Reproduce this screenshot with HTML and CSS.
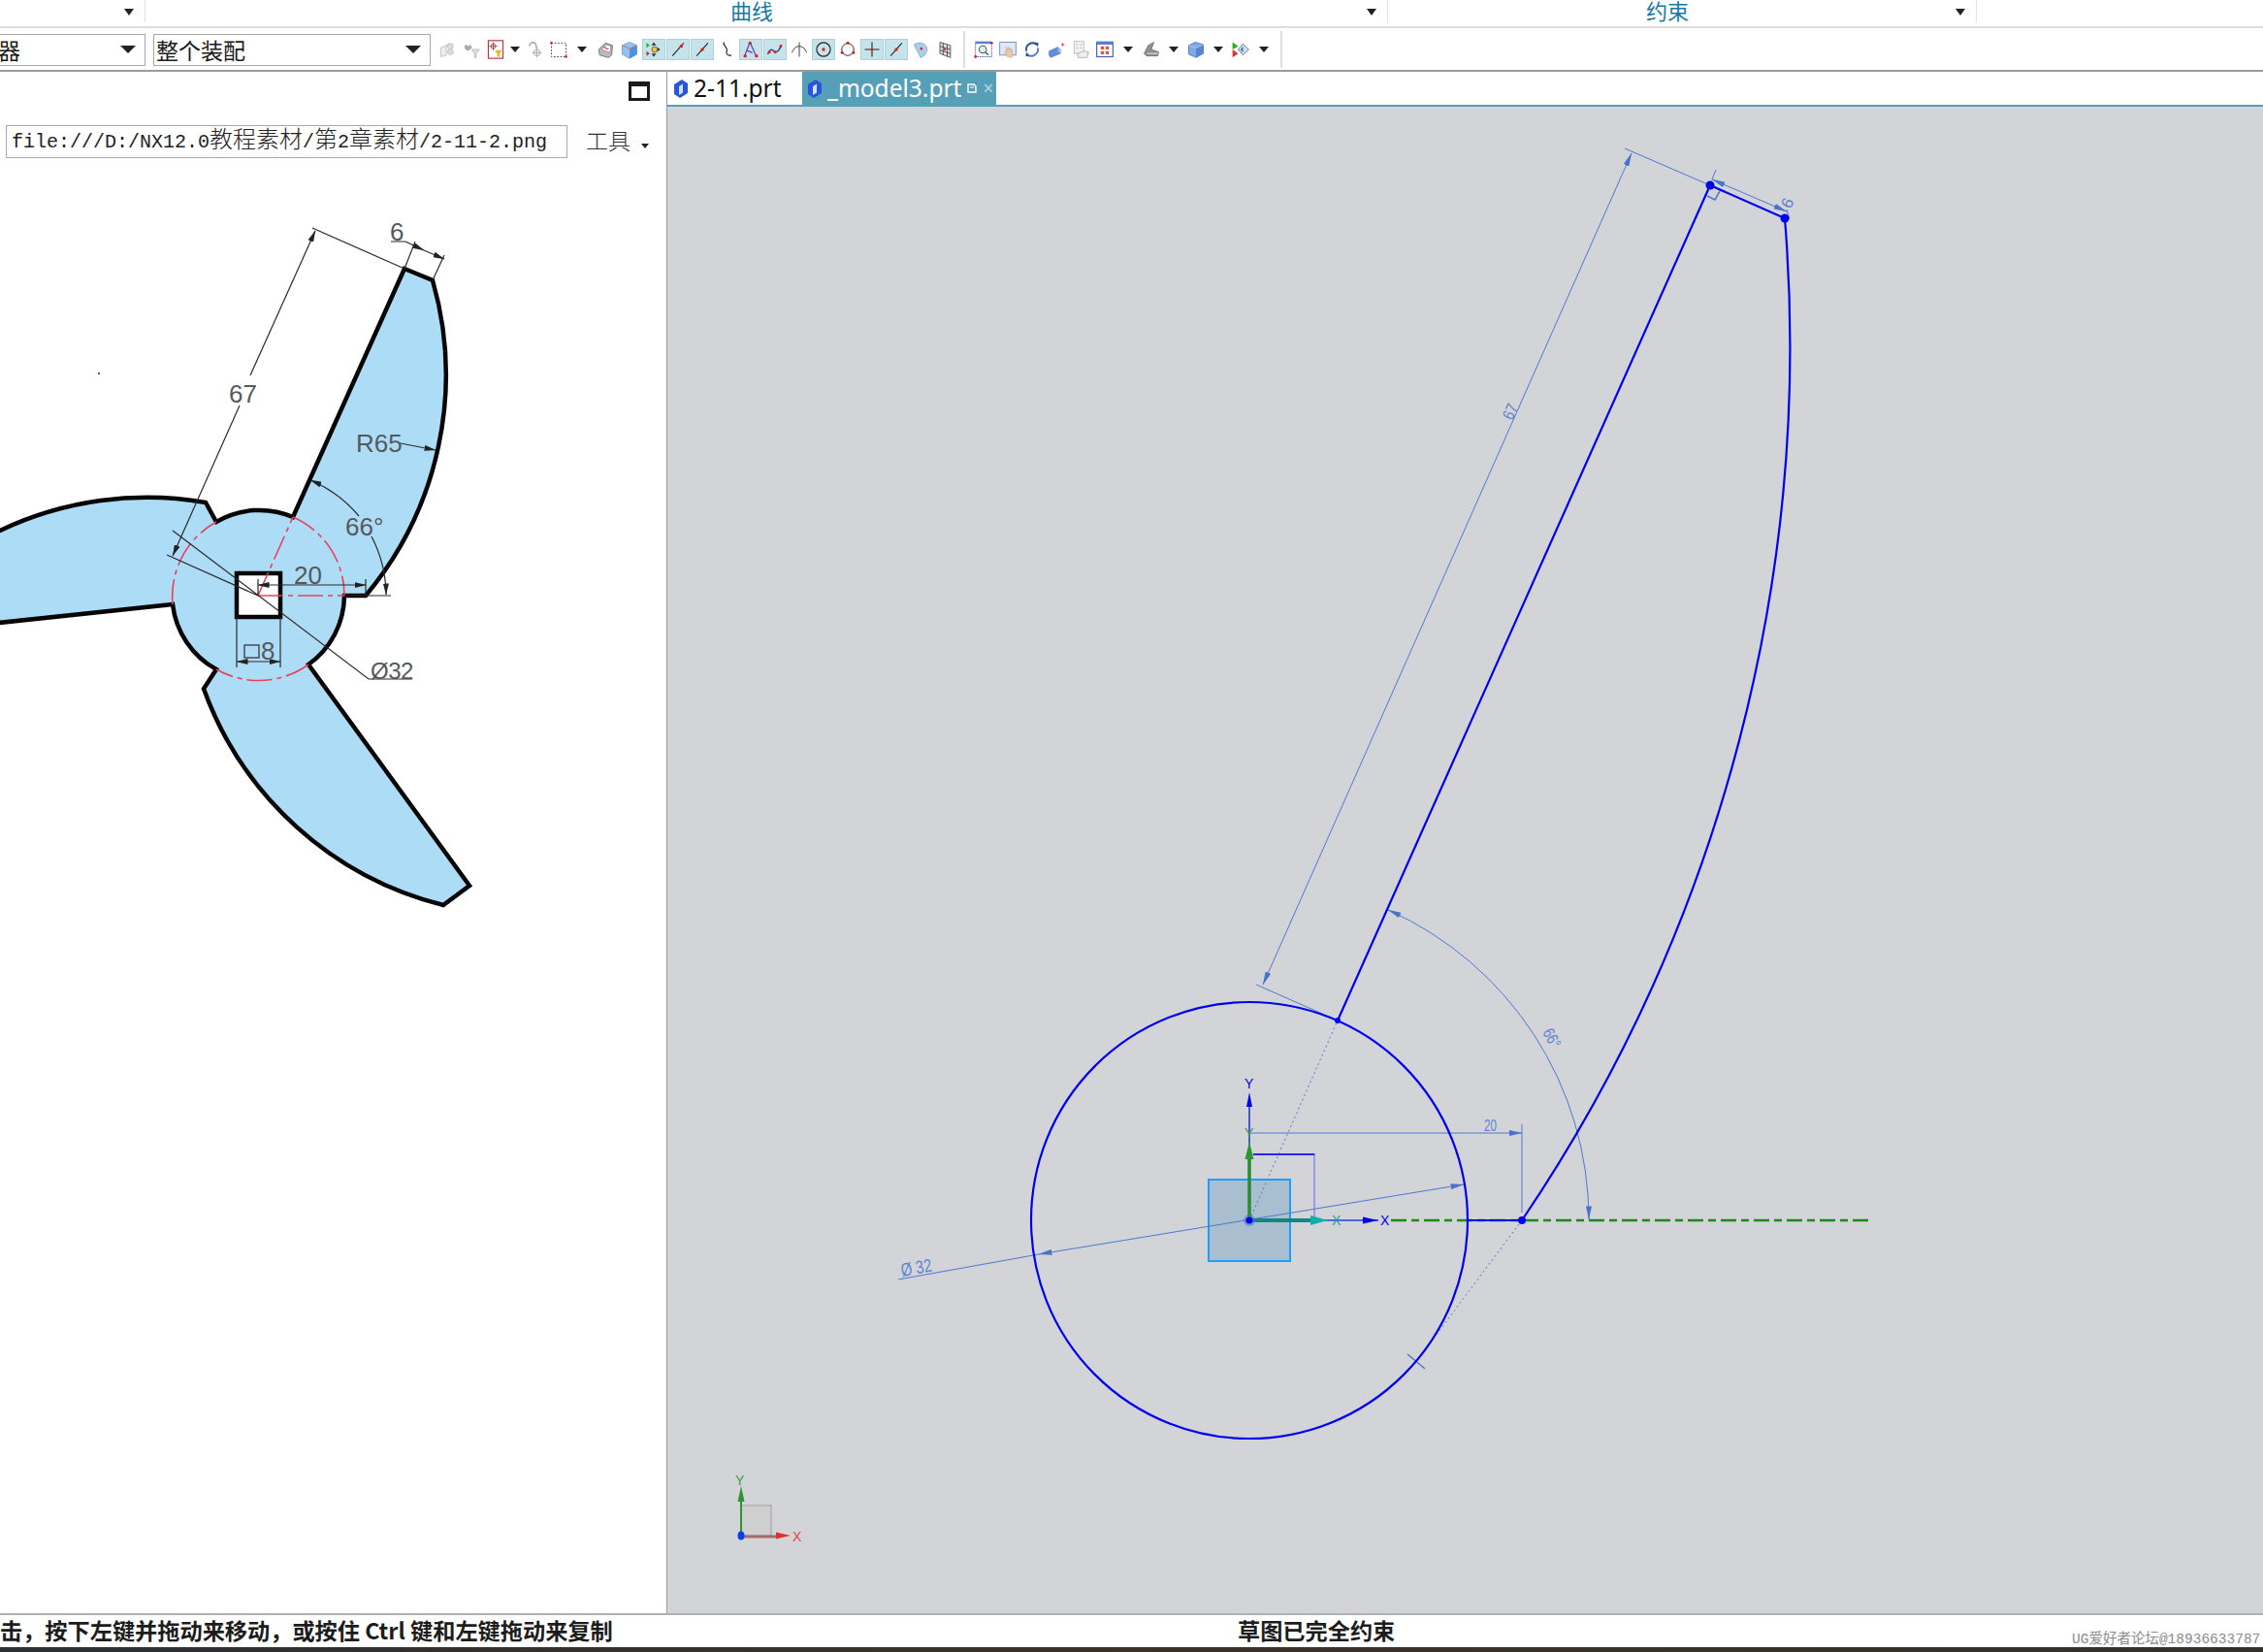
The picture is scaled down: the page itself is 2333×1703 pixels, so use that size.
FILE: index.html
```html
<!DOCTYPE html>
<html lang="zh">
<head>
<meta charset="utf-8">
<title>NX 草图</title>
<link rel="stylesheet" href="styles.css">
</head>
<body>
<div class="app">
  <div class="ribbon">
    <div class="rsec rsec-a"><span class="rlabel"></span><i class="tri tri-s"></i></div>
    <div class="rsec rsec-b"><span class="rlabel">曲线</span><i class="tri tri-s"></i></div>
    <div class="rsec rsec-c"><span class="rlabel">约束</span><i class="tri tri-s"></i></div>
  </div>

  <div class="toolbar">
    <div class="combo combo-a"><span class="combo-text combo-clip">器</span><i class="tri tri-l"></i></div>
    <div class="combo combo-b"><span class="combo-text">整个装配</span><i class="tri tri-l"></i></div>
    <div class="tools">
      <span class="btn"><svg class="ic" viewBox="0 0 24 24"><path d="M4 10l7-3v12l-7 2zM11 7l3-2v3" fill="#eee" stroke="#bbb"/><circle cx="16" cy="8" r="3.5" fill="#ddd" stroke="#bbb"/><circle cx="16" cy="15" r="3.5" fill="#ddd" stroke="#bbb"/></svg></span>
      <span class="btn"><svg class="ic" viewBox="0 0 24 24"><path d="M5 6a4 4 0 1 0 6 5l2-1-3-5-1 3z" fill="#aaa"/><path d="M12 12h10l-4 5v5h-2v-5z" fill="#ddd" stroke="#bbb"/></svg></span>
      <span class="btn"><svg class="ic" viewBox="0 0 24 24"><rect x="3" y="1" width="18" height="22" fill="#fff" stroke="#c8303c" stroke-width="1.4"/><circle cx="9" cy="8" r="3" fill="none" stroke="#555"/><path d="M9 3v10M4 8h10" stroke="#a33"/><path d="M11 13h9l-3 4v4h-3v-4z" fill="#f0b020"/></svg></span>
      <span class="arrow a14"><i class="tri tri-m"></i></span>
      <span class="btn"><svg class="ic" viewBox="0 0 24 24"><path d="M6 8a4 4 0 0 1 8-1l1 4" fill="none" stroke="#aaa" stroke-width="2"/><circle cx="15" cy="16" r="4" fill="#eee" stroke="#aaa"/><path d="M15 10v12M9 16h12" stroke="#aaa"/></svg></span>
      <span class="btn"><svg class="ic" viewBox="0 0 24 24"><rect x="3" y="4" width="18" height="17" fill="none" stroke="#222" stroke-dasharray="2 2"/><circle cx="3" cy="4" r="1.6" fill="#d22"/><circle cx="21" cy="21" r="1.6" fill="#d22"/></svg></span>
      <span class="arrow a22"><i class="tri tri-m"></i></span>
      <span class="btn"><svg class="ic" viewBox="0 0 24 24"><path d="M4 12l8-8 9 3-1 12-4 3-11-3z" fill="#bbb" stroke="#666"/><path d="M7 12l7-6 5 2-1 8z" fill="#fff" stroke="#888"/><path d="M10 9l6 3" stroke="#d33" stroke-width="1.5"/></svg></span>
      <span class="btn"><svg class="ic" viewBox="0 0 24 24"><path d="M3 7l9-4 9 4v11l-9 5-9-5z" fill="#8ec4ee" stroke="#6a9fd8"/><path d="M12 11v12l9-5V7z" fill="#4f8fdc"/><path d="M3 7l9 4 9-4" fill="none" stroke="#e55" stroke-width=".9"/></svg></span>
      <span class="btn on"><svg class="ic" viewBox="0 0 24 24"><path d="M12 3l3 4h-6zM12 21l-3-4h6zM20 12l-4 3v-6z" fill="#333"/><circle cx="13" cy="12" r="3.5" fill="#f4c430" stroke="#555"/><path d="M3 4v6l4-3z" fill="#2a2"/><path d="M3 14v6l4-3z" fill="#d22"/></svg></span>
      <span class="btn on"><svg class="ic" viewBox="0 0 24 24"><path d="M5 20L19 4" stroke="#222" stroke-width="1.3"/><circle cx="16" cy="8" r="2" fill="#d22"/></svg></span>
      <span class="btn on"><svg class="ic" viewBox="0 0 24 24"><path d="M5 20L19 4" stroke="#222" stroke-width="1.3"/><circle cx="12" cy="12" r="2" fill="#d22"/></svg></span>
      <span class="btn"><svg class="ic" viewBox="0 0 24 24"><path d="M9 3c-3 4 6 6 3 12-1 3 3 5 6 4" fill="none" stroke="#222" stroke-width="1.4"/></svg></span>
      <span class="btn on"><svg class="ic" viewBox="0 0 24 24"><path d="M11 3L4 21M11 3l8 18M7 13l7 3" fill="none" stroke="#6a3fb8" stroke-width="1.5"/><circle cx="11" cy="4" r="2" fill="#d22"/><circle cx="5" cy="20" r="2" fill="#d22"/><circle cx="19" cy="20" r="2" fill="#d22"/></svg></span>
      <span class="btn on"><svg class="ic" viewBox="0 0 24 24"><path d="M3 18c4-10 7-4 9-3s6-2 8-9" fill="none" stroke="#23458a" stroke-width="1.6"/><circle cx="5" cy="15" r="1.8" fill="#d22"/><circle cx="12" cy="15" r="1.8" fill="#d22"/><circle cx="19" cy="8" r="1.8" fill="#d22"/></svg></span>
      <span class="btn"><svg class="ic" viewBox="0 0 24 24"><path d="M3 16c2-6 6-8 9-8s7 2 9 8M12 3v18" fill="none" stroke="#444" stroke-width="1.2"/></svg></span>
      <span class="btn on"><svg class="ic" viewBox="0 0 24 24"><circle cx="12" cy="12" r="8.5" fill="none" stroke="#222" stroke-width="1.4"/><circle cx="12" cy="12" r="2" fill="#d22"/></svg></span>
      <span class="btn"><svg class="ic" viewBox="0 0 24 24"><circle cx="12" cy="12" r="7.5" fill="none" stroke="#333" stroke-width="1.2"/><circle cx="12" cy="4" r="1.8" fill="#d22"/><circle cx="5" cy="16" r="1.8" fill="#d22"/><circle cx="19" cy="16" r="1.8" fill="#d22"/></svg></span>
      <span class="btn on"><svg class="ic" viewBox="0 0 24 24"><path d="M12 3v18M3 12h18" stroke="#222" stroke-width="1.3"/><circle cx="12" cy="12" r="1.8" fill="#d22"/></svg></span>
      <span class="btn on"><svg class="ic" viewBox="0 0 24 24"><path d="M5 20L19 4" stroke="#222" stroke-width="1.3"/><circle cx="12" cy="12" r="2" fill="#d22"/></svg></span>
      <span class="btn"><svg class="ic" viewBox="0 0 24 24"><path d="M4 6c6-4 14-2 16 4 1 5-3 11-8 12C10 17 6 11 4 6z" fill="#a9cfe8" stroke="#7fa6c6"/><circle cx="13" cy="11" r="1.6" fill="#d22"/></svg></span>
      <span class="btn"><svg class="ic" viewBox="0 0 24 24"><path d="M6 3l13 4v15L6 17zM6 8l13 4M6 13l13 4M10 4v15M15 6v15" fill="#ddd" stroke="#444"/><circle cx="12" cy="12" r="1.4" fill="#d22"/></svg></span>
      <span class="vsep vsep-a"></span>
      <span class="btn"><svg class="ic" viewBox="0 0 24 24"><rect x="2" y="3" width="20" height="18" fill="#fff" stroke="#2a4fc0" stroke-dasharray="2 1"/><rect x="2" y="2" width="20" height="3" fill="#5a7fd0"/><circle cx="11" cy="12" r="4.5" fill="#ddeef5" stroke="#555" stroke-width="1.3"/><path d="M14 15l4 4" stroke="#555" stroke-width="1.6"/><circle cx="2" cy="21" r="1.7" fill="#d22"/><circle cx="22" cy="4" r="1.7" fill="#d22"/></svg></span>
      <span class="btn"><svg class="ic" viewBox="0 0 24 24"><rect x="2" y="3" width="20" height="16" fill="#dfe8f6" stroke="#6a80b8"/><path d="M11 21l-3-6 2-1V9l2 4 1-4 1 4 2-3v5l2-2-1 9z" fill="#eccb9c" stroke="#b98" stroke-width=".6"/></svg></span>
      <span class="btn"><svg class="ic" viewBox="0 0 24 24"><path d="M5 14A8 8 0 0 1 18 6" fill="none" stroke="#2a4fa0" stroke-width="2.2"/><path d="M19 10A8 8 0 0 1 6 18" fill="none" stroke="#5a7fc0" stroke-width="2.2"/><path d="M15 3l5 1-1 5zM9 21l-5-1 1-5z" fill="#2a4fa0"/></svg></span>
      <span class="btn"><svg class="ic" viewBox="0 0 24 24"><path d="M3 14l11-5 3 3v5l-12 5-2-3z" fill="#5f8fd8" stroke="#3a66b0" stroke-width=".6"/><path d="M14 9l3 3v5l-3-3z" fill="#9fc0ee"/><path d="M20 4v4M18 6h4" stroke="#d22"/></svg></span>
      <span class="btn"><svg class="ic" viewBox="0 0 24 24"><rect x="4" y="2" width="12" height="15" fill="#f2f2f2" stroke="#bbb"/><path d="M6 6h3M11 6h3M6 10h3M11 10h3" stroke="#bbb"/><path d="M8 17l8-3 6 1-2 7H9z" fill="#eee" stroke="#aaa"/></svg></span>
      <span class="btn"><svg class="ic" viewBox="0 0 24 24"><rect x="2" y="3" width="20" height="18" fill="#fff" stroke="#3f5fc0" stroke-width="1.4"/><rect x="2" y="2" width="20" height="4" fill="#5a7fd0"/><path d="M7 8h4v4H7zM13 8h4v4h-4zM7 14h4v4H7zM13 14h4v4h-4z" fill="#e8523a"/></svg></span>
      <span class="arrow a22"><i class="tri tri-m"></i></span>
      <span class="btn"><svg class="ic" viewBox="0 0 24 24"><path d="M3 17l5-10 7-4-3 9 9 3-1 5H6z" fill="#8f8f8f" stroke="#555" stroke-width=".7"/><path d="M7 17h13" stroke="#ddd" stroke-width="1.4"/></svg></span>
      <span class="arrow a20"><i class="tri tri-m"></i></span>
      <span class="btn"><svg class="ic" viewBox="0 0 24 24"><path d="M3 7l8-4 10 3v11l-9 5-9-4z" fill="#7ea9e6" stroke="#4a72b8"/><path d="M12 10v12l9-5V6z" fill="#5885cf"/><path d="M3 7l9 3 9-4" fill="none" stroke="#b7d0f2"/></svg></span>
      <span class="arrow a20"><i class="tri tri-m"></i></span>
      <span class="btn"><svg class="ic" viewBox="0 0 24 24"><path d="M2 3l7 5-7 4z" fill="#2a2"/><path d="M2 12l7 5-7 5z" fill="#d33"/><path d="M15 5l7 7-7 7-6-7z" fill="#cfe0f5" stroke="#567"/><path d="M15 8l-3 4 3 4z" fill="#3a66b0"/></svg></span>
      <span class="arrow a22"><i class="tri tri-m"></i></span>
      <span class="vsep vsep-b"></span>
    </div>
  </div>

  <div class="main">
    <aside class="side">
      <div class="side-head"><span class="maxbtn"></span></div>
      <div class="side-bar">
        <div class="urlbox">file:///D:/NX12.0<span class="cjk">教程素材</span>/<span class="cjk">第</span>2<span class="cjk">章素材</span>/2-11-2.png</div>
        <span class="toolmenu">工具</span>
        <i class="tri tri-xs"></i>
      </div>
      <svg class="drawing" viewBox="0 170 686 1493" width="686" height="1493">
        <defs>
          <marker id="ah" viewBox="0 0 12 6" refX="11.5" refY="3" markerWidth="12" markerHeight="6" markerUnits="userSpaceOnUse" orient="auto-start-reverse"><path d="M0 0L12 3 0 6z" fill="#222"/></marker>
        </defs>
        <path class="blade" d="M417 277L446 289A354 354 0 0 1 377 614L355 614A88 88 0 0 1 318 685L484 913L457 933A354 354 0 0 1 210 710L223 690A88 88 0 0 1 178 623L-20 644L-20 557L0 547A354 354 0 0 1 212 518L223 538A88 88 0 0 1 302 533Z"/>
        <path class="red" d="M302 533A88 88 0 0 1 355 614M318 685A88 88 0 0 1 223 690M178 623A88 88 0 0 1 223 538"/>
        <rect class="keyway" x="244" y="591" width="45" height="45"/>
        <path class="red" d="M266 614L302 533M266 614L355 614"/>
        <path class="dim" d="M322 235L417 277M172 572L266 614M428 249L417 277M458 263L446 289M355 614H403M377 597V614M266 597V614M244 636V688M289 636V688M178 547L380 700H425M403 249H418"/>
        <path class="dim" marker-start="url(#ah)" d="M325 238L258 387"/>
        <path class="dim" marker-start="url(#ah)" d="M178 573L247 418"/>
        <path class="dim" marker-end="url(#ah)" d="M418 249L437 258"/>
        <path class="dim" marker-end="url(#ah)" d="M437 258L458 267"/>
        <path class="dim" marker-start="url(#ah)" marker-end="url(#ah)" d="M266 603H377"/>
        <path class="dim" marker-start="url(#ah)" d="M320 495A132 132 0 0 1 370 532"/>
        <path class="dim" marker-end="url(#ah)" d="M383 553A132 132 0 0 1 398 613"/>
        <path class="dim" marker-end="url(#ah)" d="M413 457L449 464"/>
        <path class="dim" marker-start="url(#ah)" marker-end="url(#ah)" d="M244 682H289"/>
        <rect class="dim" x="252" y="665" width="15" height="13"/>
        <circle class="speck" cx="102" cy="385" r="1"/>
        <text class="note" x="236" y="415">67</text>
        <text class="note" x="402" y="248">6</text>
        <text class="note" x="367" y="466">R65</text>
        <text class="note" x="356" y="552">66°</text>
        <text class="note" x="303" y="602">20</text>
        <text class="note" x="269" y="680">8</text>
        <text class="note note-sm" x="382" y="700">Ø32</text>
      </svg>
    </aside>

    <section class="work">
      <div class="tabs">
        <div class="tab">
          <svg class="tabic" viewBox="0 0 16 20"><path d="M1 6l8-5 6 4v10l-8 5-6-4z" fill="#2a55d8"/><path d="M6 8l4-2.500v9L6 17z" fill="#cfe0ff"/></svg>
          <span>2-11.prt</span>
        </div>
        <div class="tab active">
          <svg class="tabic" viewBox="0 0 16 20"><path d="M1 6l8-5 6 4v10l-8 5-6-4z" fill="#2a55d8"/><path d="M6 8l4-2.500v9L6 17z" fill="#cfe0ff"/></svg>
          <span>_model3.prt</span>
          <svg class="pin" viewBox="0 0 10 12"><path d="M1 2h6l2 2v6H1z" fill="none" stroke="#fff" stroke-width="1.4"/><path d="M3 5h4" stroke="#fff"/></svg>
          <span class="close">×</span>
        </div>
      </div>
      <svg class="canvas" viewBox="688 110 1645 1553" width="1645" height="1553">
        <defs>
          <marker id="bh" viewBox="0 0 14 6" refX="13.5" refY="3" markerWidth="14" markerHeight="6" markerUnits="userSpaceOnUse" orient="auto-start-reverse"><path d="M0 0L14 3 0 6z" fill="#4a72cc"/></marker>
        </defs>
        <rect class="dcs" x="1246" y="1216" width="84" height="84"/>
        <path class="ghost" d="M1292 1190H1355V1258"/>
        <path class="sk-thin" d="M1292 1190H1355"/>
        <path class="bdot" d="M1288 1258L1379 1052M1569 1258L1480 1377"/>
        <path class="bdim" d="M1675 153L1763 191M1295 1015L1379 1052M1769 175L1765 185M1842 216L1845 226M1569 1159V1250"/>
        <path class="bmark" d="M1760 202L1768 206L1773 197M1451 1396L1469 1411"/>
        <path class="bdim" marker-start="url(#bh)" marker-end="url(#bh)" d="M1682 158L1302 1015"/>
        <path class="bdim" marker-start="url(#bh)" marker-end="url(#bh)" d="M1765 185L1842 218"/>
        <path class="bdim" marker-start="url(#bh)" marker-end="url(#bh)" d="M1431 938A350 350 0 0 1 1638 1257"/>
        <path class="bdim" marker-end="url(#bh)" d="M1289 1168H1569"/>
        <path class="bdim" d="M926 1319L1071 1293"/>
        <path class="bdim" marker-start="url(#bh)" marker-end="url(#bh)" d="M1071 1293L1509 1221"/>
        <path class="axis-dash" d="M1434 1258H1931"/>
        <circle class="sk" cx="1288" cy="1258" r="225"/>
        <path class="sk" d="M1379 1052L1763 191L1840 225A1609 1609 0 0 1 1569 1258H1513"/>
        <g class="pts">
          <circle cx="1763" cy="191" r="4.500"/><circle cx="1840" cy="225" r="4.500"/><circle cx="1569" cy="1258" r="4"/><circle cx="1379" cy="1052" r="3"/>
        </g>
        <text class="blab" transform="translate(1559 434) rotate(-66)" textLength="16" lengthAdjust="spacingAndGlyphs">67</text>
        <text class="blab" transform="translate(1846 216) rotate(-66)">6</text>
        <text class="blab" transform="translate(1590 1064) rotate(62)" textLength="20" lengthAdjust="spacingAndGlyphs">66°</text>
        <text class="blab" x="1530" y="1166" textLength="13" lengthAdjust="spacingAndGlyphs">20</text>
        <text class="blab blab-lg" transform="translate(930 1316) rotate(-10)" textLength="32" lengthAdjust="spacingAndGlyphs">Ø 32</text>
        <path class="ax-lil" d="M1288 1177V1140"/>
        <path class="ax-blue" d="M1288 1258V1140M1288 1258H1421"/>
        <path class="head-blue" d="M1288 1126l-3 15h6zM1421 1258l-16-3.500v7z"/>
        <path class="ax-green" d="M1288 1258V1190"/>
        <path class="head-green" d="M1288 1177l-4.500 18h9z"/>
        <path class="ax-teal" d="M1288 1258H1352"/>
        <path class="head-teal" d="M1369 1258l-18-5v10z"/>
        <text class="axl axl-blue" x="1283" y="1122">Y</text>
        <text class="axl axl-green" x="1283" y="1173">Y</text>
        <text class="axl axl-teal" x="1373" y="1263">X</text>
        <text class="axl axl-blue" x="1423" y="1263">X</text>
        <circle class="halo" cx="1288" cy="1258" r="6"/>
        <circle class="origin" cx="1288" cy="1258" r="3.500"/>
        <rect class="wcs-box" x="764" y="1552" width="31" height="31"/>
        <path class="wcs-g" d="M764 1583V1545"/>
        <path class="head-green" d="M764 1532l-3.500 16h7z"/>
        <path class="wcs-r" d="M764 1584H800"/>
        <path class="head-red" d="M815 1583l-15-3.500v7z"/>
        <text class="axl axl-green" x="758" y="1531">Y</text>
        <text class="axl axl-red" x="817" y="1589">X</text>
        <ellipse class="wcs-o" cx="764" cy="1583" rx="3.500" ry="4.500"/>
      </svg>
    </section>
  </div>

  <div class="status">
    <span class="st-a">击，按下左键并拖动来移动，或按住 Ctrl 键和左键拖动来复制</span>
    <span class="st-b">草图已完全约束</span>
    <span class="st-c">UG爱好者论坛@18936633787</span>
  </div>
  <div class="taskbar"></div>
</div>
</body>
</html>
```

FILE: styles.css
```css
* { box-sizing: border-box; }
html, body { margin: 0; padding: 0; background: #fff; }
body { width: 2333px; height: 1703px; overflow: hidden; font-family: "Noto Sans CJK SC", "Noto Sans", sans-serif; color: #222; }
.app { display: flex; flex-direction: column; width: 2333px; height: 1703px; overflow: hidden; }

/* triangles */
.tri { display: block; width: 0; height: 0; border-style: solid; border-color: #222 transparent transparent; }
.tri-s { border-width: 7px 5px 0; }
.tri-m { border-width: 6px 5.500px 0; }
.tri-l { border-width: 8px 8px 0; }
.tri-xs { border-width: 5px 4.500px 0; }

/* ribbon group titles */
.ribbon { display: flex; height: 29px; border-bottom: 2px solid #dcdcdc; flex: none; }
.rsec { display: flex; align-items: flex-start; height: 23px; border-right: 1px solid #e2e2e2; padding-right: 11px; }
.rsec .tri { margin-top: 9px; margin-left: 9px; }
.rsec-a { width: 150px; }
.rsec-b { width: 1281px; }
.rsec-c { width: 607px; }
.rlabel { flex: 1; text-align: center; font-size: 22px; line-height: 22px; color: #167aa3; margin-top: -1px; }

/* toolbar */
.toolbar { display: flex; align-items: center; height: 45px; flex: none; border-bottom: 2px solid #9a9a9a; padding-bottom: 0; background: #fff; }
.combo { display: flex; align-items: center; justify-content: space-between; height: 33px; border: 1.500px solid #a8a8a8; background: #fff; padding-right: 9px; margin-top: 1px; }
.combo-a { width: 151px; margin-left: -1px; margin-right: 8px; }
.combo-b { width: 286px; }
.combo-text { font-size: 23px; line-height: 30px; padding-left: 2px; color: #1a1a1a; }
.combo-clip { margin-left: -2px; padding-left: 0; }
.tools { display: flex; align-items: center; gap: 1px; margin-left: 5px; height: 44px; }
.btn { display: flex; align-items: center; justify-content: center; width: 24px; height: 22px; flex: none; border: 1px solid transparent; }
.btn.on { background: #c6e3ea; border-color: #a9d2dc; }
.ic { width: 20px; height: 20px; display: block; overflow: visible; }
.arrow { display: flex; align-items: center; justify-content: center; flex: none; }
.a14 { width: 14px; }
.a20 { width: 20px; }
.a22 { width: 22px; }
.vsep { display: block; width: 2px; height: 38px; background: #dedede; flex: none; }
.vsep-a { margin: 0 6px; }
.vsep-b { margin-left: 5px; }

/* main area */
.main { display: flex; flex: 1; min-height: 0; }
.side { width: 688px; flex: none; border-right: 1.500px solid #9a9a9a; background: #fff; display: flex; flex-direction: column; overflow: hidden; }
.side-head { height: 47px; display: flex; justify-content: flex-end; align-items: flex-start; padding: 10px 17px 0 0; flex: none; }
.maxbtn { display: block; width: 22px; height: 20px; border: 3px solid #1a1a1a; border-top-width: 5px; }
.side-bar { height: 49px; display: flex; align-items: center; flex: none; }
.urlbox { width: 579px; height: 34px; margin-left: 6px; border: 1.500px solid #aaa; padding-left: 5px; font-family: "Liberation Mono", "Noto Sans CJK SC", monospace; font-size: 20px; line-height: 33px; white-space: nowrap; overflow: hidden; color: #222; }
.cjk { font-family: "Noto Sans CJK SC", sans-serif; font-size: 24px; line-height: 20px; font-weight: 300; }
.toolmenu { font-size: 23px; line-height: 28px; margin-left: 19px; margin-bottom: 4px; color: #333; font-weight: 300; }
.side-bar .tri-xs { margin-left: 11px; margin-top: 10px; }
.drawing { display: block; flex: none; }

.blade { fill: #addcf7; stroke: #050505; stroke-width: 4.500px; stroke-linejoin: miter; }
.red { fill: none; stroke: #e8415c; stroke-width: 1.600px; stroke-dasharray: 26 5 5 5; }
.keyway { fill: #fff; stroke: #050505; stroke-width: 4.500px; }
.dim { fill: none; stroke: #2a2a2a; stroke-width: 1.200px; }
.speck { fill: #222; }
.note { font-family: "Liberation Sans", sans-serif; font-size: 26px; fill: #55595c; }
.note-sm { font-size: 24px; letter-spacing: -.5px; }

/* graphics window */
.work { flex: 1; display: flex; flex-direction: column; min-width: 0; }
.tabs { display: flex; height: 36px; flex: none; border-bottom: 2px solid #569fb9; background: #fff; }
.tab { display: flex; align-items: center; width: 139px; padding-left: 6px; gap: 5px; font-family: "Noto Sans", sans-serif; font-size: 24.500px; line-height: 34px; color: #111; white-space: nowrap; }
.tab.active { width: 200px; background: #569fb9; color: #fff; padding-left: 5px; }
.tabic { width: 16px; height: 20px; flex: none; }
.pin { width: 10px; height: 12px; flex: none; margin-left: 1px; }
.close { font-size: 19px; color: #b8d3de; margin-left: 1px; line-height: 20px; }
.canvas { display: block; flex: 1; background: #d2d4d7; }

.sk { fill: none; stroke: #0000f0; stroke-width: 2.200px; }
.sk-thin { fill: none; stroke: #0000f0; stroke-width: 1.500px; }
.ghost { fill: none; stroke: #9a9aee; stroke-width: 2px; }
.pts circle { fill: #0000f0; }
.bdim { fill: none; stroke: #4f78cf; stroke-width: 1px; }
.bmark { fill: none; stroke: #4f78cf; stroke-width: 1.600px; }
.bdot { fill: none; stroke: #4f78cf; stroke-width: 1px; stroke-dasharray: 2 3; }
.blab { font-family: "Liberation Sans", sans-serif; font-size: 17px; fill: #5f83d2; }
.blab-lg { font-size: 19px; }
.dcs { fill: #a9bfd0; stroke: #1c9eff; stroke-width: 2px; }
.axis-dash { fill: none; stroke: #1b8a1b; stroke-width: 2.500px; stroke-dasharray: 16 5 8 5; }
.ax-blue { fill: none; stroke: #2b3fd8; stroke-width: 1.500px; }
.ax-lil { fill: none; stroke: #9a9aee; stroke-width: 2px; }
.ax-green { fill: none; stroke: #2b8a2f; stroke-width: 3.500px; }
.ax-teal { fill: none; stroke: #14857f; stroke-width: 4px; }
.head-blue { fill: #0000e6; }
.head-green { fill: #2f9433; }
.head-teal { fill: #12aeac; }
.head-red { fill: #e03131; }
.axl { font-family: "Liberation Sans", sans-serif; font-size: 14px; }
.axl-blue { fill: #0000e6; }
.axl-green { fill: #3d9a43; }
.axl-teal { fill: #14a3a0; }
.axl-red { fill: #e04545; }
.halo { fill: #4e6fd0; opacity: .55; }
.origin { fill: #0000f0; }
.wcs-box { fill: #cfcfd0; stroke: #b0b0b0; stroke-width: 1.500px; }
.wcs-g { fill: none; stroke: #2f9433; stroke-width: 2px; }
.wcs-r { fill: none; stroke: #a86a6a; stroke-width: 3px; }
.wcs-o { fill: #0a3fe0; }

/* status */
.status { display: grid; grid-template-columns: 1276px 860px 197px; align-items: center; height: 35px; flex: none; border-top: 2px solid #b0b0b0; background: #fff; position: relative; }
.st-a, .st-b { font-size: 23.200px; font-weight: 700; line-height: 30px; margin-top: -4px; color: #1c1c1c; white-space: nowrap; }
.st-c { font-family: "Liberation Mono", "Noto Sans CJK SC", monospace; font-size: 14.500px; line-height: 16px; align-self: end; color: #8c8c8c; white-space: nowrap; }
.taskbar { height: 5px; flex: none; background: linear-gradient(90deg, #2d2f33, #3a332a 50%, #33302c); }
```
